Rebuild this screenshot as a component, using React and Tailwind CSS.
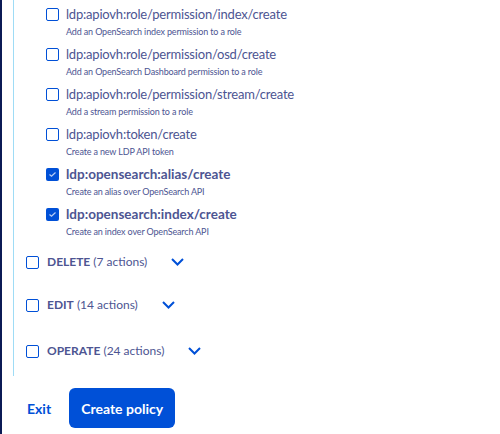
import React from "react";

const font = { fontFamily: 'Lato, "Noto Sans", sans-serif' };

function Box({ checked }) {
  return checked ? (
    <span className="flex h-[13px] w-[13px] shrink-0 items-center justify-center rounded-[2px] bg-[#0050d7]">
      <svg width="9" height="7" viewBox="0 0 9 7" fill="none">
        <path d="M1.5 3.5 L3.5 5.3 L7.5 1.5" stroke="#b8cdf5" strokeWidth="1.2" />
      </svg>
    </span>
  ) : (
    <span className="block h-[13px] w-[13px] shrink-0 rounded-[2px] border border-[#0050d7] bg-white" />
  );
}

const items = [
  ["ldp:apiovh:role/permission/index/create", "Add an OpenSearch index permission to a role", false],
  ["ldp:apiovh:role/permission/osd/create", "Add an OpenSearch Dashboard permission to a role", false],
  ["ldp:apiovh:role/permission/stream/create", "Add a stream permission to a role", false],
  ["ldp:apiovh:token/create", "Create a new LDP API token", false],
  ["ldp:opensearch:alias/create", "Create an alias over OpenSearch API", true],
  ["ldp:opensearch:index/create", "Create an index over OpenSearch API", true],
];

const groups = [
  ["DELETE", "(7 actions)", "mt-[14px]"],
  ["EDIT", "(14 actions)", "mt-[23px]"],
  ["OPERATE", "(24 actions)", "mt-[26px]"],
];

function Chevron() {
  return (
    <svg width="13" height="8" viewBox="0 0 13 8" fill="none">
      <path d="M1 1 L6.5 6.5 L12 1" stroke="#0050d7" strokeWidth="2" />
    </svg>
  );
}

export default function App() {
  return (
    <div className="flex h-[434px] w-[500px] bg-white text-[#4d5592]" style={font}>
      <div className="w-[2px] shrink-0 bg-[#0b1a55]" />
      <div className="flex flex-1 flex-col">
        <div className="ml-[11px] flex h-[376px] flex-col border-l border-[#9fdcf6]">
          <div className="flex flex-col gap-[6px] pl-[32px] pt-[4px]">
            {items.map(([t, d, c]) => (
              <div key={t} className="flex items-start gap-[7px]">
                <div className="pt-[4px]">
                  <Box checked={c} />
                </div>
                <div className="flex flex-col">
                  <span
                    className={`leading-[21px] ${
                      c ? "text-[13.5px] font-bold" : "text-[13px] tracking-[-0.2px]"
                    }`}
                  >
                    {t}
                  </span>
                  <span className="text-[9px] leading-[13px] tracking-[-0.15px]">{d}</span>
                </div>
              </div>
            ))}
          </div>
          <div className="flex flex-col pl-[12px]">
            {groups.map(([g, n, m]) => (
              <div key={g} className={`flex h-[20px] items-center ${m}`}>
                <Box />
                <span className="ml-[8px] text-[12px]">
                  <span className="font-bold">{g}</span> {n}
                </span>
                <span className="ml-[24px] flex items-center">
                  <Chevron />
                </span>
              </div>
            ))}
          </div>
        </div>
        <div className="mt-[12px] flex items-center pl-[25px]">
          <span className="text-[14px] font-bold text-[#0050d7]">Exit</span>
          <button className="ml-[18px] h-[40px] w-[106px] rounded-[6px] bg-[#0050d7] text-[14px] font-bold text-white">
            Create policy
          </button>
        </div>
      </div>
    </div>
  );
}
